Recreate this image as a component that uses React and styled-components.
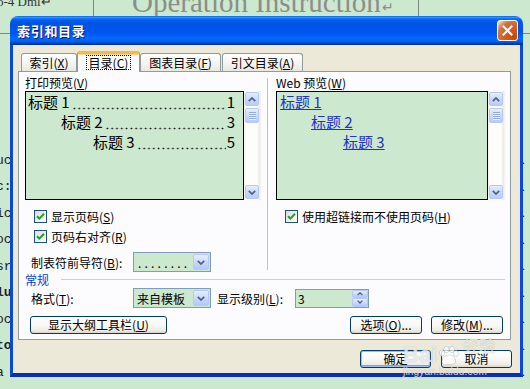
import React from 'react';
import styled, { createGlobalStyle, css } from 'styled-components';

const UI = `"Noto Sans CJK SC", "Noto Sans", sans-serif`;
const GREEN = '#cce8cf';

const GlobalStyle = createGlobalStyle`
  html, body { margin: 0; padding: 0; }
  body {
    width: 530px; height: 389px; overflow: hidden;
    background: ${GREEN};
    font-family: ${UI};
  }
  * { box-sizing: border-box; }
`;

/* ---------- background document ---------- */
const Desktop = styled.div`
  position: relative;
  width: 530px;
  height: 389px;
  overflow: hidden;
  background: ${GREEN};
`;

const DocHeader = styled.div`
  display: flex;
  height: 34px;
  border-bottom: 1px solid #7c8a7e;
`;

const HeadCell = styled.div`
  width: ${p => p.$w}px;
  flex: none;
  border-right: 1px solid #7c8a7e;
  overflow: visible;
  white-space: nowrap;
`;

const HeadRest = styled.div`
  flex: 1;
  padding: 4px 0 0 64px;
`;

const SmallDocText = styled.div`
  font-family: "Liberation Serif", serif;
  font-size: 13px;
  line-height: 13px;
  color: #333;
  margin: -5px 0 0 -3px;
`;

const DocTitle = styled.div`
  font-family: "Liberation Serif", serif;
  font-size: 29px;
  line-height: 30px;
  color: #8a8f8a;
  margin-top: -13px;
  padding-left: 38px;
`;

const ReturnMark = styled.span`
  font-size: 14px;
  margin-left: 1px;
`;

const PageMark = styled.span`
  font-family: "Liberation Serif", serif;
  font-size: 11px;
  color: #777;
`;

const DocBody = styled.div`
  padding-top: 113px;
  display: flex;
  flex-direction: column;
`;

const DocLine = styled.div`
  height: 26.5px;
  display: flex;
  align-items: center;
  justify-content: space-between;
`;

const Frag = styled.span`
  font-family: "Liberation Mono", monospace;
  font-size: 13px;
  color: #222;
  margin-left: -4px;
  font-weight: ${p => (p.$bold ? 'bold' : 'normal')};
`;

const Dot = styled.span`
  font-family: "Liberation Serif", serif;
  font-size: 13px;
  color: #222;
  margin-right: 5px;
`;

/* ---------- dialog window ---------- */
const Dialog = styled.div`
  position: absolute;
  left: 10px;
  top: 16px;
  width: 513px;
  height: 361px;
  display: flex;
  flex-direction: column;
  border-radius: 8px 8px 0 0;
  overflow: hidden;
  font-family: ${UI};
  font-size: 12px;
  color: #000;
`;

const TitleBar = styled.div`
  height: 29px;
  flex: none;
  display: flex;
  align-items: center;
  justify-content: space-between;
  padding: 0 5px 0 7px;
  background: linear-gradient(180deg,
    #0058ee 0%, #3a93ff 4%, #288eff 6%, #127dff 8%, #036ffc 10%,
    #0262ee 14%, #0057e5 20%, #0054e3 24%, #0055eb 56%, #005bf5 66%,
    #026afe 76%, #0062ef 86%, #0052d6 92%, #0040ab 94%, #003092 100%);
`;

const Title = styled.span`
  color: #fff;
  font-weight: bold;
  font-size: 13px;
  letter-spacing: 0.7px;
  text-shadow: 1px 1px #0f1089;
`;

const CloseButton = styled.div`
  width: 21px;
  height: 21px;
  border: 1px solid #fff;
  border-radius: 3px;
  display: flex;
  align-items: center;
  justify-content: center;
  background: radial-gradient(circle at 85% 85%, #cc4600 0%, #dc6527 55%, #cd7546 70%, #ffccb2 92%, #fff 100%);
`;

const Frame = styled.div`
  flex: 1;
  display: flex;
  border-style: solid;
  border-color: #0a48dc;
  border-bottom-color: #0a2fb4;
  border-width: 0 3px 4px 3px;
`;

const Client = styled.div`
  flex: 1;
  min-width: 0;
  background: #ece9d8;
  display: flex;
  flex-direction: column;
  padding: 6px 8px 0 5px;
`;

const TabRow = styled.div`
  display: flex;
  align-items: flex-end;
  height: 20px;
  padding-left: 3px;
  position: relative;
  z-index: 1;
`;

const Tab = styled.div`
  width: ${p => p.$w}px;
  margin-left: ${p => p.$ml || 0}px;
  height: 18px;
  border: 1px solid #919b9c;
  border-bottom: none;
  border-radius: 3px 3px 0 0;
  background: linear-gradient(180deg, #fff 0%, #f3f3ef 60%, #e8e7e0 100%);
  display: flex;
  align-items: center;
  justify-content: center;
  line-height: 14px;
  ${p => p.$active && css`
    height: 21px;
    margin-bottom: -1px;
    background: #fcfcfe;
    border-top: 3px solid #f7b54a;
    box-shadow: inset 0 1px 0 #ffd98e;
    padding-bottom: 1px;
  `}
`;

const Focus = styled.span`
  border: 1px dotted #000;
  padding: 0 2px;
  line-height: 13px;
`;

const Key = styled.span`
  text-decoration: underline;
`;

const Panel = styled.div`
  height: 269px;
  margin-right: 1px;
  border: 1px solid #919b9c;
  background: #fcfcfe;
  padding: 4px 5px 0 6px;
  display: flex;
  flex-direction: column;
`;

const TopSection = styled.div`
  display: flex;
`;

const Column = styled.div`
  width: ${p => p.$w}px;
  flex: none;
  min-width: 0;
  display: flex;
  flex-direction: column;
`;

const Separator = styled.div`
  width: 1px;
  flex: none;
  background: #c5c2b2;
  margin: 2px 8px 2px 6px;
`;

const Caption = styled.div`
  height: 14px;
  line-height: 14px;
  margin-bottom: 1px;
  white-space: nowrap;
`;

const PreviewRow = styled.div`
  display: flex;
  height: 109px;
  min-width: 0;
`;

const PreviewBox = styled.div`
  flex: 1;
  min-width: 0;
  overflow: hidden;
  border: 1px solid #000;
  background: ${GREEN};
  padding: 0 8px 0 1px;
  display: flex;
  flex-direction: column;
`;

const PrintLine = styled.div`
  display: flex;
  height: 20px;
  align-items: center;
  font-size: 15px;
  line-height: 20px;
  padding-left: ${p => p.$indent + 1}px;
  white-space: nowrap;
  min-width: 0;
`;

/* dotted tab leader drawn as a repeating dot pattern */
const Leader = styled.span`
  flex: 1;
  min-width: 0;
  align-self: stretch;
  margin: 0 1px 0 2px;
  background-image: radial-gradient(circle, #111 0.75px, transparent 1.1px);
  background-size: 4.8px 3px;
  background-repeat: repeat-x;
  background-position: 0 14.5px;
`;

const WebLine = styled.div`
  height: 20px;
  display: flex;
  align-items: center;
  padding-left: ${p => p.$indent + 2}px;
`;

const WebLink = styled.span`
  font-size: 15px;
  line-height: 18px;
  color: #2233cc;
  text-decoration: underline;
  white-space: nowrap;
`;

const Scrollbar = styled.div`
  width: 17px;
  flex: none;
  display: flex;
  flex-direction: column;
  align-items: flex-start;
  padding: 1px 2px 1px 1px;
  background: linear-gradient(to right, #f3f1ea 0, #fdfdfb 2px, #fdfdfb 13px, #e9e8e0 16px, #fdfdfb 17px);
`;

const ScrollButton = styled.div`
  width: 14px;
  height: 14px;
  flex: none;
  border: 1px solid #b6c8f4;
  border-radius: 2px;
  background: linear-gradient(180deg, #e6eefd 0%, #cad9fc 50%, #b9cbf9 100%);
  display: flex;
  align-items: center;
  justify-content: center;
  margin-top: ${p => (p.$bottom ? 'auto' : '0')};
`;

const Thumb = styled(ScrollButton)`
  height: 15px;
  margin-top: 2px;
  flex-direction: column;
  gap: 1px;
`;

const Grip = styled.div`
  width: 7px;
  height: 1px;
  background: #8fa8e4;
  box-shadow: 0 1px 0 #eef3fe;
`;

const CheckRow = styled.div`
  display: flex;
  align-items: center;
  gap: 4px;
  height: 20px;
  margin-left: 9px;
  margin-top: ${p => p.$mt || 0}px;
  white-space: nowrap;
`;

const CheckBox = styled.div`
  width: 13px;
  height: 13px;
  flex: none;
  border: 1px solid #1c5180;
  background: linear-gradient(135deg, #dcdcd7 0%, #fff 100%);
  display: flex;
  align-items: center;
  justify-content: center;
`;

const FieldRow = styled.div`
  display: flex;
  align-items: center;
  height: 20px;
  margin-top: ${p => p.$mt || 0}px;
  white-space: nowrap;
`;

const FieldLabel = styled.span`
  width: ${p => p.$w}px;
  flex: none;
  margin-left: 6px;
`;

const Combo = styled.div`
  width: ${p => p.$w}px;
  height: ${p => p.$h || 20}px;
  flex: none;
  border: 1px solid #7f9db9;
  background: ${GREEN};
  display: flex;
  align-items: center;
`;

const ComboText = styled.span`
  flex: 1;
  padding-left: ${p => p.$pl || 4}px;
  letter-spacing: ${p => p.$ls || 0}px;
`;

const DropButton = styled.div`
  width: 16px;
  height: 16px;
  margin: 1px;
  border: 1px solid #b6c8f4;
  border-radius: 2px;
  background: linear-gradient(180deg, #e6eefd 0%, #cad9fc 50%, #b4c8f8 100%);
  display: flex;
  align-items: center;
  justify-content: center;
`;

const SpinButtons = styled.div`
  width: 16px;
  height: 17px;
  margin: 0 0 0 auto;
  display: flex;
  flex-direction: column;
`;

const SpinBtn = styled(DropButton)`
  width: 16px;
  height: 8.5px;
  margin: 0;
  border-radius: 2px;
`;

const GroupHeader = styled.div`
  display: flex;
  align-items: center;
  height: 13px;
  margin-top: 1px;
`;

const GroupTitle = styled.span`
  color: #0046d5;
  line-height: 13px;
`;

const GroupLine = styled.div`
  flex: 1;
  height: 1px;
  background: #d0d0bf;
  margin-left: 12px;
`;

const ButtonRow = styled.div`
  display: flex;
  align-items: center;
  gap: 9px;
  margin-top: 8px;
  padding: 0 2px 0 5px;
`;

const Spacer = styled.div`
  flex: 1;
`;

const XPButton = styled.div`
  width: ${p => p.$w}px;
  height: 18px;
  flex: none;
  border: 1px solid #003c74;
  border-radius: 3px;
  background: linear-gradient(180deg, #fff 0%, #f7f7f4 55%, #ecebe5 85%, #d8d4c8 100%);
  display: flex;
  align-items: center;
  justify-content: center;
  line-height: 16px;
  white-space: nowrap;
  ${p => p.$default && css`
    box-shadow: inset 0 0 0 1px #9ebdf0, inset 0 -1px 0 1px #7da2e8;
  `}
`;

const Footer = styled.div`
  display: flex;
  justify-content: flex-end;
  gap: 10px;
  margin-top: 10px;
`;

/* watermark overlay */
const Watermark = styled.div`
  position: absolute;
  left: 403px;
  top: 330px;
  width: 100px;
  color: rgba(255, 255, 255, 0.72);
  text-shadow: 0 0 1px rgba(110, 120, 110, 0.55);
  font-family: "Liberation Sans", sans-serif;
  pointer-events: none;
`;

const WmTop = styled.div`
  display: flex;
  align-items: flex-end;
  height: 36px;
`;

const WmBig = styled.span`
  font-size: 22px;
  font-weight: bold;
  line-height: 22px;
`;

const WmCJK = styled.span`
  font-family: ${UI};
  font-size: 16px;
  line-height: 18px;
  margin-left: 4px;
  margin-bottom: 12px;
`;

const WmSmall = styled.div`
  font-size: 10px;
  line-height: 11px;
  letter-spacing: 0.2px;
`;

const Chevron = ({ up, w = 8, color = '#4d6185' }) => (
  <svg width={w} height={w * 0.625} viewBox="0 0 8 5">
    <path
      d={up ? 'M0.8 4.2 L4 1 L7.2 4.2' : 'M0.8 0.8 L4 4 L7.2 0.8'}
      fill="none"
      stroke={color}
      strokeWidth="1.7"
    />
  </svg>
);

const Check = () => (
  <svg width="9" height="9" viewBox="0 0 9 9">
    <path d="M1 4.2 L3.4 6.6 L8 1.8" fill="none" stroke="#21a121" strokeWidth="2" />
  </svg>
);

const Paw = () => (
  <svg width="22" height="20" viewBox="0 0 22 20">
    <g fill="rgba(255,255,255,0.75)" stroke="rgba(110,120,110,0.45)" strokeWidth="0.6">
      <ellipse cx="5" cy="7" rx="2.6" ry="3.2" />
      <ellipse cx="9.5" cy="3.5" rx="2.6" ry="3.2" />
      <ellipse cx="15" cy="3.5" rx="2.6" ry="3.2" />
      <ellipse cx="19" cy="7.5" rx="2.4" ry="3" />
      <path d="M5 16 C5 11 9 9 12 9 C15 9 19 11 18.5 16 C18 19 14 18.5 12 18.5 C9.5 18.5 5 19.5 5 16 Z" />
    </g>
  </svg>
);

const ScrollBar = () => (
  <Scrollbar>
    <ScrollButton><Chevron up /></ScrollButton>
    <Thumb>
      <Grip /><Grip /><Grip /><Grip />
    </Thumb>
    <ScrollButton $bottom><Chevron /></ScrollButton>
  </Scrollbar>
);

const docLines = [
  ['uc', false], ['c:', false], ['ic', false], ['oc', false], ['sr', false],
  ['lu', true], ['oc', false], ['to', true], ['a', false],
];

const printLines = [
  { t: '标题 1', n: '1', i: 0 },
  { t: '标题 2', n: '3', i: 33 },
  { t: '标题 3', n: '5', i: 65 },
];

const webLines = [
  { t: '标题 1', i: 0 },
  { t: '标题 2', i: 31 },
  { t: '标题 3', i: 63 },
];

export default function App() {
  return (
    <>
      <GlobalStyle />
      <Desktop>
        <DocHeader>
          <HeadCell $w={94}><SmallDocText>o-4 Dml↵</SmallDocText></HeadCell>
          <HeadCell $w={325}>
            <DocTitle>Operation Instruction<ReturnMark>↵</ReturnMark></DocTitle>
          </HeadCell>
          <HeadRest><PageMark>P</PageMark></HeadRest>
        </DocHeader>
        <DocBody>
          {docLines.map(([t, b], i) => (
            <DocLine key={i}>
              <Frag $bold={b}>{t}</Frag>
              <Dot>.</Dot>
            </DocLine>
          ))}
        </DocBody>

        <Dialog>
          <TitleBar>
            <Title>索引和目录</Title>
            <CloseButton>
              <svg width="11" height="11" viewBox="0 0 11 11">
                <path d="M1.5 1.5 L9.5 9.5 M9.5 1.5 L1.5 9.5" stroke="#fff" strokeWidth="2" strokeLinecap="square" />
              </svg>
            </CloseButton>
          </TitleBar>
          <Frame>
            <Client>
              <TabRow>
                <Tab $w={56}>索引(<Key>X</Key>)</Tab>
                <Tab $w={63} $active><Focus>目录(<Key>C</Key>)</Focus></Tab>
                <Tab $w={81}>图表目录(<Key>F</Key>)</Tab>
                <Tab $w={81} $ml={1}>引文目录(<Key>A</Key>)</Tab>
              </TabRow>
              <Panel>
                <TopSection>
                  <Column $w={236}>
                    <Caption>打印预览(<Key>V</Key>)</Caption>
                    <PreviewRow>
                      <PreviewBox>
                        {printLines.map(l => (
                          <PrintLine key={l.t} $indent={l.i}>
                            <span>{l.t}</span>
                            <Leader />
                            <span>{l.n}</span>
                          </PrintLine>
                        ))}
                      </PreviewBox>
                      <ScrollBar />
                    </PreviewRow>
                    <CheckRow $mt={6}>
                      <CheckBox><Check /></CheckBox>
                      <span>显示页码(<Key>S</Key>)</span>
                    </CheckRow>
                    <CheckRow>
                      <CheckBox><Check /></CheckBox>
                      <span>页码右对齐(<Key>R</Key>)</span>
                    </CheckRow>
                    <FieldRow $mt={6}>
                      <FieldLabel $w={102}>制表符前导符(<Key>B</Key>):</FieldLabel>
                      <Combo $w={78}>
                        <ComboText $ls={3.2}>........</ComboText>
                        <DropButton><Chevron /></DropButton>
                      </Combo>
                    </FieldRow>
                  </Column>
                  <Separator />
                  <Column $w={229}>
                    <Caption>Web 预览(<Key>W</Key>)</Caption>
                    <PreviewRow>
                      <PreviewBox>
                        {webLines.map(l => (
                          <WebLine key={l.t} $indent={l.i}>
                            <WebLink>{l.t}</WebLink>
                          </WebLine>
                        ))}
                      </PreviewBox>
                      <ScrollBar />
                    </PreviewRow>
                    <CheckRow $mt={6}>
                      <CheckBox><Check /></CheckBox>
                      <span>使用超链接而不使用页码(<Key>H</Key>)</span>
                    </CheckRow>
                  </Column>
                </TopSection>

                <GroupHeader>
                  <GroupTitle>常规</GroupTitle>
                  <GroupLine />
                </GroupHeader>

                <FieldRow $mt={2}>
                  <FieldLabel $w={102}>格式(<Key>T</Key>):</FieldLabel>
                  <Combo $w={78}>
                    <ComboText $pl={3}>来自模板</ComboText>
                    <DropButton><Chevron /></DropButton>
                  </Combo>
                  <FieldLabel $w={78}>显示级别(<Key>L</Key>):</FieldLabel>
                  <Combo $w={74} $h={19}>
                    <ComboText $pl={2}>3</ComboText>
                    <SpinButtons>
                      <SpinBtn><Chevron up w={6} /></SpinBtn>
                      <SpinBtn><Chevron w={6} /></SpinBtn>
                    </SpinButtons>
                  </Combo>
                </FieldRow>

                <ButtonRow>
                  <XPButton $w={137}>显示大纲工具栏(<Key>U</Key>)</XPButton>
                  <Spacer />
                  <XPButton $w={72}>选项(<Key>O</Key>)...</XPButton>
                  <XPButton $w={72}>修改(<Key>M</Key>)...</XPButton>
                </ButtonRow>
              </Panel>

              <Footer>
                <XPButton $w={71} $default>确定</XPButton>
                <XPButton $w={71}>取消</XPButton>
              </Footer>
            </Client>
          </Frame>
        </Dialog>

        <Watermark>
          <WmTop>
            <WmBig>Bai</WmBig>
            <Paw />
            <WmCJK>经验</WmCJK>
          </WmTop>
          <WmSmall>jingyan.baidu.com</WmSmall>
        </Watermark>
      </Desktop>
    </>
  );
}
